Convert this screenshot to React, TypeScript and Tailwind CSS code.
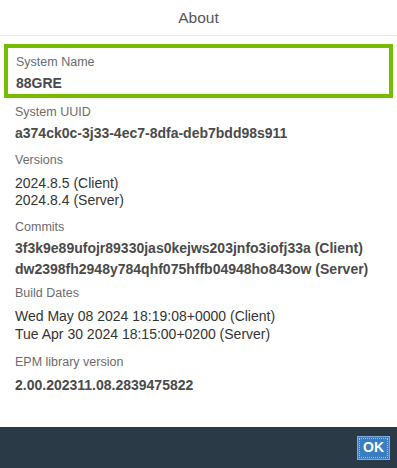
import React from "react";

const font = { fontFamily: '"Liberation Sans", Arial, sans-serif' };

function Label({ children, className = "" }: { children: React.ReactNode; className?: string }) {
  return <div className={`text-[12.5px] leading-[16px] text-[#6b6b6b] ${className}`}>{children}</div>;
}

export default function App() {
  return (
    <div className="w-[397px] h-[468px] bg-white flex flex-col overflow-hidden" style={font}>
      <div className="h-[36px] flex items-center justify-center border-b border-[#e6e6e6] text-[15.5px] text-[#555]">
        About
      </div>
      <div className="flex-1 px-[4px]">
        <div className="mt-[8px] border-[4px] border-[#76bd00] pl-[8px] pt-[6px] pb-[2px]">
          <Label>System Name</Label>
          <div className="mt-[4px] text-[14px] leading-[18px] font-bold text-[#4a4a4a]">88GRE</div>
        </div>
        <div className="pl-[11px]">
          <Label className="mt-[6px]">System UUID</Label>
          <div className="mt-[4px] text-[14px] leading-[18px] font-bold text-[#4a4a4a]">
            a374ck0c-3j33-4ec7-8dfa-deb7bdd98s911
          </div>
          <Label className="mt-[10px]">Versions</Label>
          <div className="mt-[7px] text-[14px] leading-[17px] text-[#333]">
            <div>2024.8.5 (Client)</div>
            <div>2024.8.4 (Server)</div>
          </div>
          <Label className="mt-[10px]">Commits</Label>
          <div className="mt-[3px] text-[14px] leading-[21px] font-bold text-[#4a4a4a]">
            <div>3f3k9e89ufojr89330jas0kejws203jnfo3iofj33a (Client)</div>
            <div>dw2398fh2948y784qhf075hffb04948ho843ow (Server)</div>
          </div>
          <Label className="mt-[5px]">Build Dates</Label>
          <div className="mt-[6px] text-[14px] leading-[18px] text-[#333]">
            <div>Wed May 08 2024 18:19:08+0000 (Client)</div>
            <div>Tue Apr 30 2024 18:15:00+0200 (Server)</div>
          </div>
          <Label className="mt-[11px]">EPM library version</Label>
          <div className="mt-[6px] text-[14px] leading-[18px] font-bold text-[#4a4a4a]">2.00.202311.08.2839475822</div>
        </div>
      </div>
      <div className="h-[41px] bg-[#2b3a47] flex items-center justify-end pr-[7px]">
        <button className="w-[33px] h-[24px] bg-[#3b7dc2] border border-[#78aee0] outline outline-1 outline-dotted outline-[#9cc6ee] outline-offset-[-3px] text-white text-[14px] font-bold flex items-center justify-center">
          OK
        </button>
      </div>
    </div>
  );
}
